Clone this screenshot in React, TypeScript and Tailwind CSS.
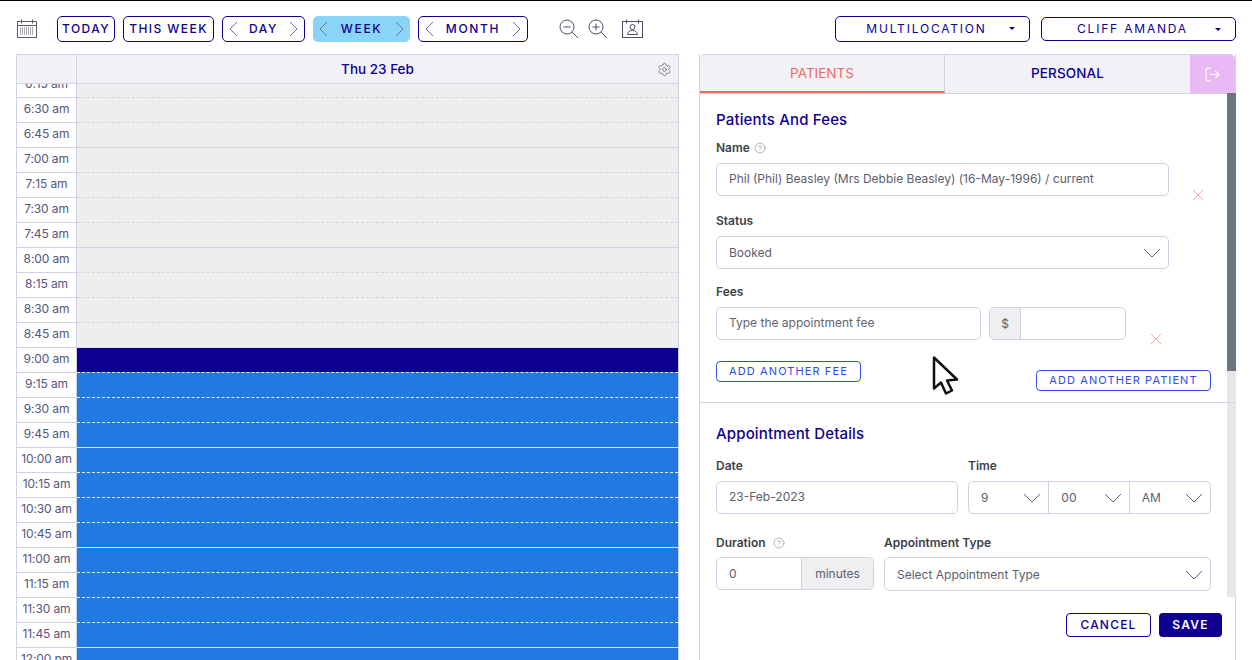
import { CircleHelp, LogOut, Settings, X } from "lucide-react";
import type { ReactNode } from "react";

const times = [
  "6:15 am", "6:30 am", "6:45 am", "7:00 am", "7:15 am", "7:30 am", "7:45 am", "8:00 am", "8:15 am", "8:30 am", "8:45 am",
  "9:00 am", "9:15 am", "9:30 am", "9:45 am", "10:00 am", "10:15 am", "10:30 am", "10:45 am", "11:00 am", "11:15 am", "11:30 am", "11:45 am", "12:00 pm",
];

function Chevron({ dir, className }: { dir: "left" | "right" | "down"; className?: string }) {
  if (dir === "down") {
    return (
      <svg width="18" height="10" viewBox="0 0 18 10" fill="none" stroke="#5f6478" strokeWidth="1" className={className}>
        <path d="M1 1l8 8 8-8" />
      </svg>
    );
  }
  return (
    <svg width="10" height="16" viewBox="0 0 10 16" fill="none" stroke="#6d6fa8" strokeWidth="1" className={className}>
      <path d={dir === "left" ? "M9 1L2 8l7 7" : "M1 1l7 7-7 7"} />
    </svg>
  );
}

function NavButton({ label, className }: { label: string; className: string }) {
  return (
    <div className={`h-[26px] rounded-[5px] border border-[#10008f] flex items-center justify-center text-[12px] tracking-[0.12em] text-[#10008f] font-medium ${className}`}>
      {label}
    </div>
  );
}

function StepButton({ label, active, className }: { label: string; active?: boolean; className: string }) {
  return (
    <div
      className={`h-[26px] rounded-[5px] flex items-center justify-between px-[5px] text-[12px] tracking-[0.14em] text-[#10008f] font-medium ${
        active ? "bg-[#8ad4f8]" : "border border-[#10008f]"
      } ${className}`}
    >
      <Chevron dir="left" />
      <span className="-mt-px">{label}</span>
      <Chevron dir="right" />
    </div>
  );
}

function Dropdown({ label, className }: { label: string; className: string }) {
  return (
    <div className={`w-[195px] rounded-[5px] border border-[#10008f] flex items-center justify-center relative text-[12px] tracking-[0.15em] text-[#10008f] ${className}`}>
      <span className="pr-[12px]">{label}</span>
      <span className="absolute right-[14px] top-[10px] w-0 h-0 border-x-[3px] border-x-transparent border-t-[3px] border-t-[#10008f]" />
    </div>
  );
}

function Label({ children, className = "" }: { children: ReactNode; className?: string }) {
  return <div className={`text-[12px] leading-[16px] font-semibold text-[#3d3f4b] flex items-center ${className}`}>{children}</div>;
}

function Field({ children, className = "" }: { children: ReactNode; className?: string }) {
  return (
    <div className={`h-[33px] rounded-[5px] border border-[#ced2e2] bg-white flex items-center px-[12px] text-[12px] text-[#5c606d] ${className}`}>
      {children}
    </div>
  );
}

function SelectField({ value, className = "" }: { value: string; className?: string }) {
  return (
    <Field className={`justify-between !pr-[7px] ${className}`}>
      <span>{value}</span>
      <Chevron dir="down" />
    </Field>
  );
}

function TimeRow({ time, index }: { time: string; index: number }) {
  const isHour = time.includes(":00");
  const booked = index >= 11;
  const navy = index === 11;
  let bg = "bg-[#eeeeef]";
  let line = isHour ? "border-[#cfd3e3]" : "border-dashed border-[#d3d5e2]";
  if (booked) {
    bg = navy ? "bg-[#10008f]" : "bg-[#217ae2]";
    line = isHour ? "border-[#d5e4f8]" : "border-dashed border-[#eef3fb]";
  }
  return (
    <div className="flex h-[25px]">
      <div className="w-[60px] shrink-0 bg-white border-t border-r border-[#cfd3e3] flex items-center justify-center pb-[2px] text-[12px] tracking-[-0.01em] text-[#55557a]">
        {time}
      </div>
      <div className={`flex-1 border-t ${line} ${bg}`} />
    </div>
  );
}

function Calendar() {
  return (
    <div className="w-[663px] shrink-0 border-x border-[#cfd3e3] overflow-hidden">
      <div className="h-[30px] flex bg-[#f1f1f6] border-y border-[#cfd3e3] relative z-10">
        <div className="w-[60px] border-r border-[#cfd3e3]" />
        <div className="flex-1 flex items-center justify-center text-[13.5px] font-medium text-[#10008f] pt-px">Thu 23 Feb</div>
        <Settings size={15} strokeWidth={1} className="absolute right-[6px] top-[7px] text-[#4b4f63]" />
      </div>
      <div className="-mt-[12px]">
        {times.map((t, i) => (
          <TimeRow key={t} time={t} index={i} />
        ))}
      </div>
    </div>
  );
}

function Panel() {
  return (
    <div className="w-[537px] shrink-0 flex flex-col h-[606px] relative border-r border-[#cfd3e3] border-l">
      {/* Tabs */}
      <div className="h-[40px] flex shrink-0 border-t border-b border-[#cfd3e3] rounded-t-[5px] overflow-hidden bg-[#f1f1f6] text-[13.5px]">
        <div className="w-[245px] flex items-center justify-center text-[#ec6a65] border-b-2 border-b-[#ec6a65] border-r border-r-[#cfd3e3]">PATIENTS</div>
        <div className="w-[245px] flex items-center justify-center pb-px text-[#10008f] font-medium tracking-[0.01em]">PERSONAL</div>
        <div className="flex-1 bg-[#e8b9f5] flex items-center justify-center text-white">
          <LogOut size={17} strokeWidth={1.5} />
        </div>
      </div>

      {/* Scroll track */}
      <div className="absolute right-[-1px] top-[39px] w-[9px] h-[504px] bg-[#e6e7ec]">
        <div className="h-[278px] bg-[#6e7781]" />
      </div>

      {/* Patients and fees */}
      <div className="pl-[16px] pr-[24px] h-[309px] border-b border-[#cfd3e3] shrink-0 relative">
        <h2 className="text-[15px] leading-[20px] font-medium tracking-[0.01em] text-[#10008f] pt-[16px] box-content">Patients And Fees</h2>
        <Label className="mt-[10px] gap-[4px]">
          Name <CircleHelp size={12} strokeWidth={1} className="text-[#6d7080]" />
        </Label>
        <Field className="w-[453px] mt-[7px] pb-[2px]">Phil (Phil) Beasley (Mrs Debbie Beasley) (16-May-1996) / current</Field>
        <Label className="mt-[17px]">Status</Label>
        <SelectField value="Booked" className="w-[453px] mt-[7px]" />
        <Label className="mt-[15px]">Fees</Label>
        <div className="flex gap-[8px] mt-[7px]">
          <Field className="w-[265px] pb-[2px] text-[#62666f]">Type the appointment fee</Field>
          <div className="w-[137px] h-[33px] rounded-[5px] border border-[#ced2e2] flex overflow-hidden">
            <div className="w-[31px] bg-[#efeff1] border-r border-[#ced2e2] flex items-center justify-center text-[12px] text-[#5c606d]">$</div>
          </div>
        </div>
        <div className="mt-[21px] w-[145px] h-[21px] rounded-[4px] border border-[#2f4be8] flex items-center justify-center text-[11px] tracking-[0.1em] text-[#2f4be8]">
          ADD ANOTHER FEE
        </div>
        <div className="absolute left-[336px] top-[276px] w-[175px] h-[21px] rounded-[4px] border border-[#2f4be8] flex items-center justify-center text-[11px] tracking-[0.1em] text-[#2f4be8]">
          ADD ANOTHER PATIENT
        </div>
        <X size={20} strokeWidth={0.8} className="absolute left-[488px] top-[91px] text-[#ef7b78]" />
        <X size={20} strokeWidth={0.8} className="absolute left-[446px] top-[235px] text-[#ef7b78]" />
      </div>

      {/* Appointment details */}
      <div className="pl-[16px] pr-[24px]">
        <h2 className="text-[15px] leading-[20px] font-medium tracking-[0.01em] text-[#10008f] mt-[21px]">Appointment Details</h2>
        <div className="flex gap-[10px] mt-[14px]">
          <div className="w-[242px]">
            <Label>Date</Label>
            <Field className="mt-[7px] pb-[2px]">23-Feb-2023</Field>
          </div>
          <div className="flex-1">
            <Label>Time</Label>
            <div className="mt-[7px] flex h-[33px] rounded-[5px] border border-[#ced2e2] text-[12px] text-[#5c606d]">
              {["9", "00", "AM"].map((v, i) => (
                <div key={v} className={`w-1/3 flex items-center justify-between pl-[12px] pr-[7px] ${i < 2 ? "border-r border-[#ced2e2]" : ""}`}>
                  <span>{v}</span>
                  <Chevron dir="down" />
                </div>
              ))}
            </div>
          </div>
        </div>
        <div className="flex gap-[10px] mt-[21px]">
          <div className="w-[158px]">
            <Label className="gap-[7px]">
              Duration <CircleHelp size={12} strokeWidth={1} className="text-[#6d7080]" />
            </Label>
            <div className="mt-[6px] h-[33px] flex rounded-[5px] border border-[#ced2e2] overflow-hidden text-[12px] text-[#5c606d]">
              <div className="flex-1 flex items-center px-[12px]">0</div>
              <div className="w-[72px] bg-[#efeff1] border-l border-[#ced2e2] flex items-center justify-center">minutes</div>
            </div>
          </div>
          <div className="flex-1">
            <Label>Appointment Type</Label>
            <SelectField value="Select Appointment Type" className="mt-[6px] !h-[34px] pt-[2px]" />
          </div>
        </div>
      </div>
      <div className="flex justify-end gap-[8px] pr-[13px] mt-[22px]">
        <div className="w-[85px] h-[24px] rounded-[4px] border border-[#10008f] flex items-center justify-center text-[12px] font-medium tracking-[0.1em] text-[#10008f]">CANCEL</div>
        <div className="w-[63px] h-[24px] rounded-[4px] bg-[#10008f] flex items-center justify-center text-[12px] font-semibold tracking-[0.1em] text-white">SAVE</div>
      </div>
    </div>
  );
}

export default function App() {
  return (
    <div className="h-[660px] overflow-hidden bg-white border-t border-black relative font-['Inter',sans-serif]">
      {/* Toolbar */}
      <div className="flex items-start pl-[17px] pt-[15px] h-[53px]">
        <svg width="20" height="20" viewBox="0 0 20 20" fill="none" stroke="#5a5d66" strokeWidth="1" className="mt-[3px]">
          <rect x="0.5" y="2.5" width="19" height="16" />
          <path d="M0.5 6.5h19M4.5 0.5v4M15.5 0.5v4" />
          <path d="M3 9h14M3 11h14M3 13h14M3 15h14" strokeDasharray="1 1" />
        </svg>
        <NavButton label="TODAY" className="w-[58px] ml-[20px]" />
        <NavButton label="THIS WEEK" className="w-[91px] ml-[8px]" />
        <StepButton label="DAY" className="w-[83px] ml-[8px]" />
        <StepButton label="WEEK" active className="w-[97px] ml-[8px]" />
        <StepButton label="MONTH" className="w-[110px] ml-[8px]" />
        <svg width="20" height="20" viewBox="0 0 20 20" fill="none" stroke="#4d5060" strokeWidth="1" className="ml-[31px] mt-[3px]">
          <circle cx="8" cy="8" r="7" />
          <path d="M4.5 8h7M13 13l6 6" />
        </svg>
        <svg width="20" height="20" viewBox="0 0 20 20" fill="none" stroke="#4d5060" strokeWidth="1" className="ml-[9px] mt-[3px]">
          <circle cx="8" cy="8" r="7" />
          <path d="M4.5 8h7M8 4.5v7M13 13l6 6" />
        </svg>
        <svg width="22" height="20" viewBox="0 0 22 20" fill="none" stroke="#4d5060" strokeWidth="1" className="ml-[14px] mt-[3px]">
          <rect x="0.5" y="2.5" width="20" height="16" />
          <path d="M4.5 0.5v4M16.5 0.5v4" />
          <circle cx="10.5" cy="8" r="2.5" />
          <path d="M5.500 15.500c.5-3 2.500-4 5-4s4.500 1 5 4z" />
        </svg>
        <Dropdown label="MULTILOCATION" className="h-[26px] ml-[191px]" />
        <Dropdown label="CLIFF AMANDA" className="h-[24px] ml-[11px] mt-[1px]" />
      </div>

      {/* Main */}
      <div className="flex gap-[20px] pl-[16px]">
        <Calendar />
        <Panel />
      </div>

      {/* Mouse cursor from the recording */}
      <svg width="28" height="41" viewBox="0 0 28 40" className="absolute left-[932px] top-[354px]" fill="#fff" stroke="#111" strokeWidth="2.500" strokeLinejoin="round">
        <path d="M2 2l0 31 7-6 5 11 6-3-5-10 10-1z" />
      </svg>
    </div>
  );
}
